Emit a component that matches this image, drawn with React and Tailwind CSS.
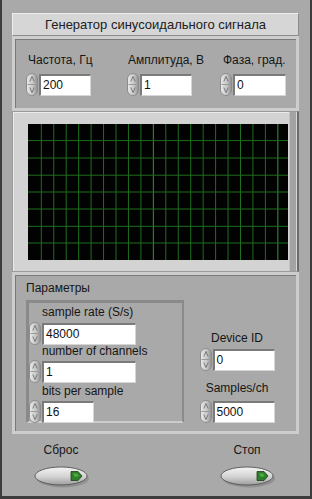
import React from "react";

const Spinner = () => (
  <svg width="12" height="23" viewBox="0 0 12 23" className="shrink-0">
    <defs>
      <linearGradient id="spg" x1="0" x2="1" y1="0" y2="0">
        <stop offset="0" stopColor="#ececec" />
        <stop offset="0.6" stopColor="#c4c4c4" />
        <stop offset="1" stopColor="#8e8e8e" />
      </linearGradient>
    </defs>
    <rect x="0.5" y="0.5" width="11" height="22" rx="5.5" fill="url(#spg)" stroke="#8c8c8c" />
    <line x1="1.5" y1="11.5" x2="10.5" y2="11.5" stroke="#9a9a9a" />
    <path d="M3.8 8.5 L6 3.5 L8.2 8.5" stroke="#6e6e6e" strokeWidth="0.9" fill="none" />
    <path d="M3.8 14.5 L6 19.5 L8.2 14.5" stroke="#6e6e6e" strokeWidth="0.9" fill="none" />
  </svg>
);

const Field = ({ value, w }) => (
  <div
    className={`flex items-center h-[22px] bg-white border-t-2 border-l-2 border-t-[#7a7a7a] border-l-[#7a7a7a] border-r border-b border-r-[#d6d6d6] border-b-[#d6d6d6] pl-[2px] text-[12px] text-[#111] leading-none ${w}`}
  >
    {value}
  </div>
);

const Control = ({ value, w }) => (
  <div className="flex items-center gap-[1px]">
    <Spinner />
    <Field value={value} w={w} />
  </div>
);

const Grid = () => {
  const vs = [];
  for (let i = 0; i < 20; i++) vs.push(13.3 + 12.45 * i);
  const hs = [16.6, 34, 51.2, 68, 85, 102.3, 119];
  return (
    <svg width="260" height="136" viewBox="0 0 260 136" className="block">
      <rect width="260" height="136" fill="#020202" />
      {vs.map((x, i) => (
        <line key={"v" + i} x1={x} y1="0" x2={x} y2="136" stroke={i === 9 || i === 19 ? "#2f9a2f" : "#1d6f1d"} strokeWidth="1" />
      ))}
      {hs.map((y, i) => (
        <line key={"h" + i} x1="0" y1={y} x2="260" y2={y} stroke="#1d6f1d" strokeWidth="1" />
      ))}
    </svg>
  );
};

const Bool = () => (
  <svg width="56" height="24" viewBox="0 0 56 24" className="block">
    <defs>
      <linearGradient id="btg" x1="0" y1="0" x2="0" y2="1">
        <stop offset="0" stopColor="#f4f4f4" />
        <stop offset="0.55" stopColor="#d2d2d2" />
        <stop offset="1" stopColor="#9c9c9c" />
      </linearGradient>
    </defs>
    <ellipse cx="29" cy="13.5" rx="26" ry="9" fill="#7c7c7c" opacity="0.55" />
    <ellipse cx="27" cy="11" rx="26" ry="9" fill="url(#btg)" stroke="#555" strokeWidth="0.9" />
    <path d="M37 6.5 L44 6.5 L48 11 L44 15.5 L37 15.5 Z" fill="#2f7d2a" stroke="#1c3f18" strokeWidth="0.8" />
    <path d="M39 8.5 L43 8.5 L45 11 L41 12 Z" fill="#4fae3f" />
  </svg>
);

export default function App() {
  return (
    <div className="w-[312px] h-[499px] bg-[#a9a9a9] border-l-2 border-r-2 border-b-[3px] border-[#3c3c3c] pl-[10px] font-['Liberation_Sans',Arial,sans-serif] text-[#161616] overflow-hidden">
      {/* title */}
      <div className="mt-[13px] w-[287px] h-[23px] bg-[#d6d6d6] border border-t-[#ededed] border-l-[#ededed] border-r-[#8c8c8c] border-b-[#8c8c8c] flex items-center justify-center text-[13px] text-[#202020]">
        Генератор синусоидального сигнала
      </div>

      {/* controls panel */}
      <div className="w-[287px] h-[75px] border-[3px] border-[#cdcdcd]">
        <div className="h-full border-t border-l border-[#7a7a7a] flex pl-[10px] pt-[13px]">
          <div className="w-[101px] flex flex-col">
            <div className="text-[12px] leading-[14px] ml-[2px]">Частота, Гц</div>
            <div className="mt-[6px]"><Control value="200" w="w-[52px]" /></div>
          </div>
          <div className="w-[93px] flex flex-col">
            <div className="text-[12px] leading-[14px] ml-[1px]">Амплитуда, В</div>
            <div className="mt-[6px]"><Control value="1" w="w-[52px]" /></div>
          </div>
          <div className="w-[70px] flex flex-col">
            <div className="text-[12px] leading-[14px] ml-[3px] whitespace-nowrap">Фаза, град.</div>
            <div className="mt-[6px]"><Control value="0" w="w-[53px]" /></div>
          </div>
        </div>
      </div>

      {/* graph */}
      <div className="w-[287px] h-[161px] border border-[#9a9a9a] border-r-2 border-r-[#6c6c6c] bg-[#d3d3d3] flex">
        <div className="w-[276px] pl-[14px] pt-[11px] border-t border-l border-[#ececec]">
          <Grid />
        </div>
        <div className="w-[8px] h-full bg-[#a3a3a3] border-l border-[#c2c2c2] border-r border-r-[#d8d8d8]" />
      </div>

      {/* params */}
      <div className="w-[287px] h-[162px] border-[3px] border-[#cdcdcd]">
        <div className="h-full border-t border-l border-[#7a7a7a] flex">
          <div className="pl-[10px] pt-[5px] flex flex-col">
            <div className="text-[12px] leading-[14px]">Параметры</div>
            <div className="mt-[5px] w-[158px] h-[123px] border-t-[3px] border-l-[3px] border-r-2 border-b-2 border-t-[#8a8a8a] border-l-[#8a8a8a] border-r-[#8a8a8a] border-b-[#cccccc] pl-[0px] pt-[2px] flex flex-col">
              <div className="text-[12px] leading-[14px] ml-[13px]">sample rate (S/s)</div>
              <div className="mt-[3px]"><Control value="48000" w="w-[94px]" /></div>
              <div className="text-[12px] leading-[14px] ml-[13px] mt-[-1px]">number of channels</div>
              <div className="mt-[2px]"><Control value="1" w="w-[94px]" /></div>
              <div className="text-[12px] leading-[14px] ml-[13px] mt-[1px]">bits per sample</div>
              <div className="mt-[2px]"><Control value="16" w="w-[52px]" /></div>
            </div>
          </div>
          <div className="ml-[16px] pt-[55px] flex flex-col items-center w-[74px]">
            <div className="text-[12px] leading-[14px]">Device ID</div>
            <div className="mt-[3px]"><Control value="0" w="w-[62px]" /></div>
            <div className="text-[12px] leading-[14px] mt-[10px]">Samples/ch</div>
            <div className="mt-[5px]"><Control value="5000" w="w-[62px]" /></div>
          </div>
        </div>
      </div>

      {/* bottom buttons */}
      <div className="flex w-[287px] pt-[9px]">
        <div className="w-[100px] flex flex-col items-center ml-[-1px]">
          <div className="text-[12px] leading-[14px]">Сброс</div>
          <div className="mt-[8px] ml-[2px]"><Bool /></div>
        </div>
        <div className="w-[100px] flex flex-col items-center ml-[86px]">
          <div className="text-[12px] leading-[14px]">Стоп</div>
          <div className="mt-[8px] ml-[2px]"><Bool /></div>
        </div>
      </div>
    </div>
  );
}
